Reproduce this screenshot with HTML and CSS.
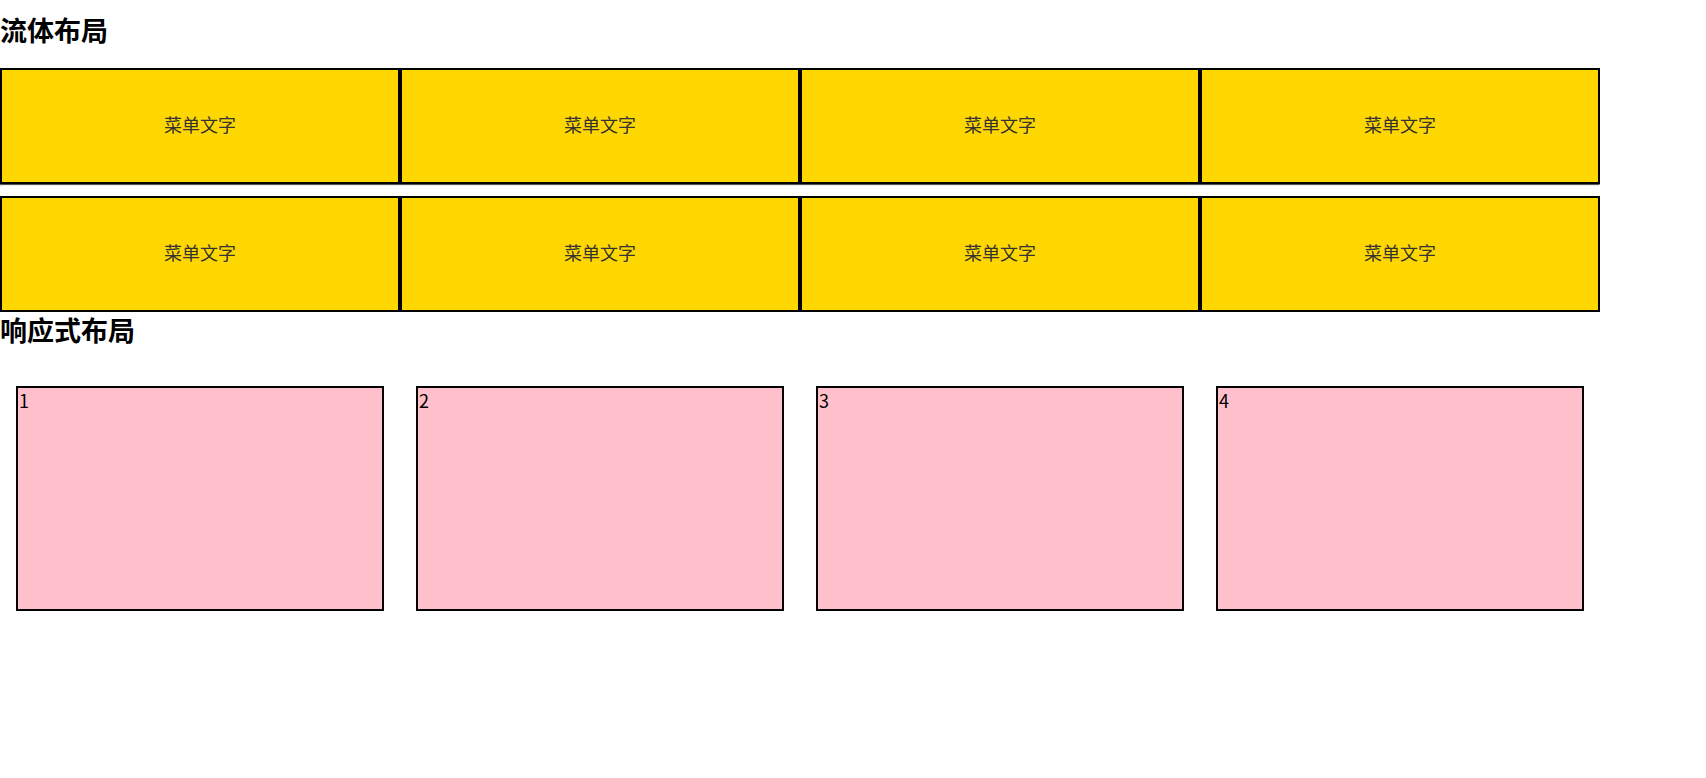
FILE: index.html
```html
<!DOCTYPE html>
<html lang="zh-CN">
<head>
  <meta charset="UTF-8">
  <meta name="viewport" content="width=device-width, initial-scale=1">
  <title>布局练习</title>
  <link rel="stylesheet" href="styles.css">
</head>
<body>
  <h2 class="title-fluid">流体布局</h2>
  <div class="fluid">
    <ul class="menu">
      <li>菜单文字</li>
      <li>菜单文字</li>
      <li>菜单文字</li>
      <li>菜单文字</li>
    </ul>
    <hr>
    <ul class="menu">
      <li>菜单文字</li>
      <li>菜单文字</li>
      <li>菜单文字</li>
      <li>菜单文字</li>
    </ul>
  </div>

  <h2>响应式布局</h2>
  <div class="grid">
    <div class="cell"><div class="box">1</div></div>
    <div class="cell"><div class="box">2</div></div>
    <div class="cell"><div class="box">3</div></div>
    <div class="cell"><div class="box">4</div></div>
  </div>
</body>
</html>
```

FILE: styles.css
```css
* {
  margin: 0;
  padding: 0;
  box-sizing: border-box;
}

body {
  font-family: "Noto Sans CJK SC", "Noto Sans", sans-serif;
  font-size: 18px;
  color: #000;
  background: #fff;
}

h2 {
  font-size: 27px;
  font-weight: bold;
  line-height: 36px;
}

.title-fluid {
  margin-top: 12px;
}

.fluid {
  width: 1600px;
  margin-top: 20px;
}

.menu {
  list-style: none;
  display: flex;
}

.menu li {
  width: 25%;
  height: 116px;
  line-height: 108px;
  border: 2px solid #000;
  background-color: gold;
  color: #333;
  text-align: center;
}

hr {
  height: 0;
  border: 1px inset #eee;
  border-top-color: #aaa;
  margin-bottom: 10px;
}

.grid {
  width: 1600px;
  display: flex;
  margin-top: 38px;
}

.cell {
  width: 25%;
  padding: 0 16px;
}

.box {
  height: 225px;
  border: 2px solid #000;
  background-color: pink;
  line-height: 24px;
  padding-left: 1px;
}
```
